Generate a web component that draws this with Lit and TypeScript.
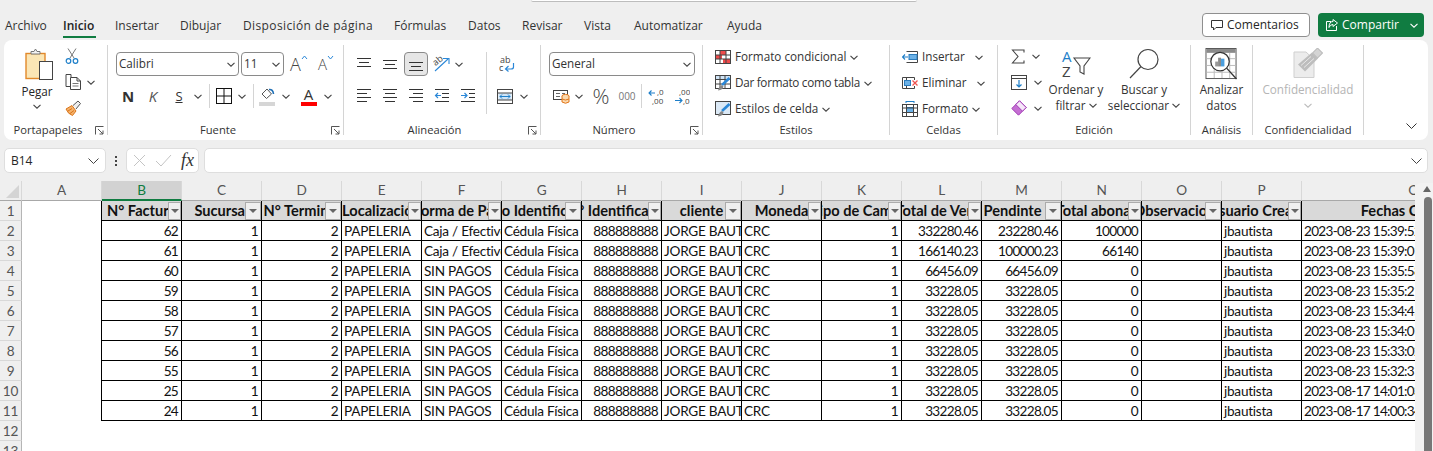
import { LitElement, html, css, svg } from "lit";
import { customElement } from "lit/decorators.js";

const chev = (c = "#444") => html`<svg class="chev" width="8" height="5" viewBox="0 0 8 5"><path d="M.5.8 4 4.2 7.5.8" fill="none" stroke=${c} stroke-width="1.1"/></svg>`;
const ic = (w: number, h: number, body: unknown) => html`<svg class="ic" width=${w} height=${h} viewBox="0 0 ${w} ${h}">${body}</svg>`;

const lines = (rows: [number, number, number][]) => ic(16, 16, rows.map(([x1, x2, y]) => svg`<path d="M${x1} ${y}.5H${x2}" stroke="#333" fill="none"/>`));
const alignTop = lines([[1, 15, 2], [3, 13, 6], [1, 15, 10]]);
const alignMid = lines([[1, 15, 4], [3, 13, 8], [1, 15, 12]]);
const alignBot = lines([[1, 15, 6], [3, 13, 10], [1, 15, 14]]);
const alignL = lines([[1, 15, 1], [1, 11, 5], [1, 15, 9], [1, 11, 13]]);
const alignC = lines([[1, 15, 1], [3, 13, 5], [1, 15, 9], [3, 13, 13]]);
const alignR = lines([[1, 15, 1], [5, 15, 5], [1, 15, 9], [5, 15, 13]]);
const outdent = ic(16, 16, svg`<path d="M1 1.5H15M8 5.5H15M8 9.5H15M1 13.5H15" stroke="#333" fill="none"/><path d="M7 7.5H1.5M4 5 1.5 7.5 4 10" stroke="#2b88d8" fill="none" stroke-width="1.2"/>`);
const indent = ic(16, 16, svg`<path d="M1 1.5H15M9 5.5H15M9 9.5H15M1 13.5H15" stroke="#333" fill="none"/><path d="M1 7.5H7M4.5 5 7 7.5 4.5 10" stroke="#2b88d8" fill="none" stroke-width="1.2"/>`);

const paste = ic(30, 33, svg`
  <rect x="1" y="5.5" width="19" height="25" fill="#fbe6b5" stroke="#e2892b" stroke-width="1.4"/>
  <path d="M6 6V3.5h3L10.500 1 12 3.500h3V6z" fill="#f4f4f4" stroke="#777"/>
  <rect x="14.500" y="13.500" width="13" height="18" fill="#fff" stroke="#444"/>`);
const cut = ic(14, 17, svg`
  <path d="M3 .5 9 10M11 .5 5 10" stroke="#777" fill="none"/>
  <circle cx="3.500" cy="13" r="2.300" fill="none" stroke="#1e7fc9" stroke-width="1.2"/><circle cx="10.500" cy="13" r="2.300" fill="none" stroke="#1e7fc9" stroke-width="1.2"/>`);
const copy = ic(17, 16, svg`
  <path d="M6 3V.5H1V12.500H5" fill="none" stroke="#444"/>
  <path d="M5.500 3.500H12L15.500 7V15.500H5.500zM12 3.500V7H15.500" fill="#fff" stroke="#444"/>
  <path d="M7.500 9.500H13.500M7.500 12H13.500" stroke="#777"/>`);
const brush = ic(17, 16, svg`
  <path d="M1 9 7 5.500 11 11 7.500 15.500Q3 14 1 9z" fill="#f5b26b" stroke="#d9741a"/>
  <path d="M3 11 7 8.500M5 13.500 9 10.500" stroke="#d9741a"/>
  <path d="M8 5.500 13 1 15.500 3.500 11 9" fill="#eee" stroke="#555"/>`);
const borders = ic(16, 16, svg`<rect x=".5" y=".5" width="15" height="15" fill="none" stroke="#111"/><path d="M8 .5V15.500M.5 8H15.500" stroke="#111"/>`);
const fill = ic(17, 19, svg`
  <path d="M3 7 8 2 12.500 7 7.500 11.500z" fill="#fff" stroke="#555"/>
  <path d="M10 2.500Q14 2 14.500 7" fill="none" stroke="#1f6fb5" stroke-width="1.600"/>
  <rect x="0" y="15" width="16" height="4" fill="#d6d6d6"/>`);
const orient = ic(18, 16, svg`
  <text x="1" y="8" font-size="9" fill="#444" font-family="Open Sans" transform="rotate(-40 5 7)">ab</text>
  <path d="M2 15 15 3M10 2.500H16V8" fill="none" stroke="#2b88d8" stroke-width="1.100"/>`);
const wrap = ic(16, 16, svg`
  <text x="1" y="7" font-size="9" fill="#444" font-family="Open Sans">ab</text>
  <text x="0" y="15" font-size="9" fill="#444" font-family="Open Sans">c</text>
  <path d="M14.500 7V11Q14.500 13 12 13H7M9.500 10 6.500 13 9.500 15.500" fill="none" stroke="#2b88d8" stroke-width="1.200"/>`);
const merge = ic(16, 15, svg`
  <rect x=".5" y=".5" width="15" height="14" fill="#fff" stroke="#444"/>
  <rect x="1.500" y="4" width="13" height="7" fill="#cfe4f6"/>
  <path d="M.5 4H15.500M.5 11H15.500" stroke="#444"/>
  <path d="M3 7.500H13M5 5.500 3 7.500 5 9.500M11 5.500 13 7.500 11 9.500" fill="none" stroke="#1e7fc9"/>`);
const currency = ic(17, 16, svg`
  <rect x=".5" y="2.500" width="14" height="9" fill="#fff" stroke="#444"/>
  <path d="M3 5.500H7M3 8.500H7M9 5.500H12" stroke="#666"/>
  <ellipse cx="12.500" cy="8" rx="3.500" ry="1.600" fill="#fbd9ae" stroke="#e2771b"/>
  <path d="M9 8V14Q12.500 16.500 16 14V8" fill="#fbd9ae" stroke="#e2771b"/>
  <path d="M9 11Q12.500 13 16 11" fill="none" stroke="#e2771b"/>`);
const decInc = ic(16, 17, svg`
  <text x="9" y="7" font-size="8" fill="#444" font-family="Open Sans">,0</text>
  <text x="4" y="16" font-size="8" fill="#444" font-family="Open Sans">,00</text>
  <path d="M7 5H1M3.500 2.500 1 5 3.500 7.500M1.500 5H1" fill="none" stroke="#1e7fc9" stroke-width="1.100"/>`);
const decDec = ic(16, 17, svg`
  <text x="5" y="7" font-size="8" fill="#444" font-family="Open Sans">,00</text>
  <text x="9" y="16" font-size="8" fill="#444" font-family="Open Sans">,0</text>
  <path d="M1 12.500H8M5.500 10 8 12.500 5.500 15" fill="none" stroke="#1e7fc9" stroke-width="1.100"/>`);
const cond = ic(16, 16, svg`
  <rect x=".5" y="1.500" width="15" height="13" fill="#fff" stroke="#444"/>
  <rect x="5" y="2" width="6" height="4" fill="#ee4b4b"/><rect x="1" y="6" width="6" height="4" fill="#ee4b4b"/><rect x="8" y="10" width="7" height="4" fill="#ee4b4b"/>
  <path d="M.5 6H15.500M.5 10H15.500M5 1.500V14.500M11 1.500V14.500" stroke="#444" fill="none"/>`);
const tableFmt = ic(16, 16, svg`
  <rect x=".5" y=".5" width="15" height="13" fill="#fff" stroke="#444"/>
  <rect x="1" y="1" width="14" height="3" fill="#cfe4f6"/>
  <path d="M.5 4.500H15.500M.5 9H15.500M5 .5V13.500M10 .5V13.500" stroke="#444" fill="none"/>
  <path d="M14.500 3 7 10" stroke="#2b88d8" stroke-width="2.600"/><path d="M7 10Q4 11 3 15.500 8 15 8.500 11.500z" fill="#888"/>`);
const cellFmt = ic(16, 16, svg`
  <rect x=".5" y=".5" width="15" height="13" fill="#dbe9f6" stroke="#444"/>
  <path d="M14.500 3 7 10" stroke="#2b88d8" stroke-width="2.600"/><path d="M7 10Q4 11 3 15.500 8 15 8.500 11.500z" fill="#888"/>`);
const insert = ic(16, 16, svg`
  <path d="M4.500 2.500H15.500V13.500H4.500" fill="none" stroke="#444"/>
  <rect x="7" y="5.500" width="8" height="5" fill="#6cb2e8" stroke="#2b7cbd"/>
  <path d="M.5 8H6M3 5.500.5 8 3 10.500" fill="none" stroke="#1e7fc9" stroke-width="1.100"/>`);
const del = ic(16, 16, svg`
  <path d="M.5 2.500H12.500M.5 13.500H12.500M.5 2.500V13.500M12.500 2.500V5M12.500 11V13.500M4.500 2.500V13.500" fill="none" stroke="#444"/>
  <rect x="2.500" y="5.500" width="6" height="5" fill="#6cb2e8" stroke="#2b7cbd"/>
  <path d="M10.500 5.500 15.500 10.500M15.500 5.500 10.500 10.500" stroke="#ef5350" stroke-width="1.300"/>`);
const fmtCell = ic(16, 16, svg`
  <rect x=".5" y="3.500" width="15" height="12" fill="#fff" stroke="#444"/>
  <rect x="4.500" y="6.500" width="7" height="5" fill="#6cb2e8" stroke="#2b7cbd"/>
  <path d="M.5 7H15.500M.5 11.500H15.500M4.500 3.500V15.500M11.500 3.500V15.500" stroke="#444" fill="none"/>
  <path d="M4 .5H12M4 0V2M12 0V2" stroke="#1e7fc9"/>`);
const sigma = ic(14, 15, svg`<path d="M13 3.500V1H1.500L7 7.500 1.500 14H13V11.500" fill="none" stroke="#444" stroke-width="1.100"/>`);
const fillDown = ic(16, 15, svg`<rect x=".5" y=".5" width="15" height="14" fill="#fff" stroke="#444"/><path d="M.5 3.500H15.500" stroke="#444"/><path d="M8 5V12M5.500 9.500 8 12 10.500 9.500" fill="none" stroke="#1e7fc9" stroke-width="1.200"/>`);
const eraser = ic(16, 16, svg`<path d="M8.500 .8 15.200 7.500 7.500 15.200.8 8.500z" fill="#c56fd3" stroke="#a23bb5"/><path d="M8.500 .8 15.200 7.500 11.500 11.200 4.800 4.500z" fill="#f6e6f9" stroke="#a23bb5"/>`);
const sortI = ic(30, 30, svg`
  <text x="1" y="13" font-size="15" fill="#1e7fc9" font-family="Open Sans">A</text>
  <text x="1" y="28" font-size="15" fill="#444" font-family="Open Sans">Z</text>
  <path d="M13 9H29L23 17V25L19 23V17z" fill="#fff" stroke="#444" stroke-width="1.100"/>`);
const search = ic(30, 31, svg`<circle cx="19" cy="11" r="10" fill="#fff" stroke="#444" stroke-width="1.200"/><path d="M12 18 1 29.500" stroke="#444" stroke-width="1.200"/>`);
const analyze = ic(33, 33, svg`
  <rect x=".5" y=".5" width="31" height="31" fill="#fff" stroke="#555"/>
  <rect x="1" y="1" width="30" height="4" fill="#8a8a8a"/>
  <path d="M1 11H31M1 18H31M1 25H31M9 5V31M17 5V31M25 5V31" stroke="#bbb"/>
  <circle cx="15" cy="14" r="9.500" fill="#fff" stroke="#333" stroke-width="1.300"/>
  <rect x="10" y="14" width="3" height="5" fill="#999"/><rect x="13" y="10" width="3" height="9" fill="#8a8a8a"/><rect x="16" y="11" width="3.500" height="8" fill="#4a9ede"/>
  <path d="M22 21 32 32" stroke="#333" stroke-width="1.400"/>`);
const conf = ic(30, 31, svg`
  <path d="M1 3.500H13L21 11V29H1z" fill="#ececec" stroke="#cfcfcf"/>
  <path d="M5 16 19 4 25 10 12 23z" fill="#bdbdbd"/><path d="M8 17 18 8M11 19 21 10" stroke="#e8e8e8"/>
  <rect x="21" y="1" width="7" height="7" fill="#d4d4d4" stroke="#bbb" transform="rotate(45 24.500 4.500)"/>`);
const launcher = html`<svg class="launch" width="9" height="9" viewBox="0 0 9 9"><path d="M.5 8.500V.5H8.500M3 3 8 8M8 4.500V8H4.500" fill="none" stroke="#555"/></svg>`;

type Col = { l: string; h: string; n?: boolean; left?: boolean };
const cols: Col[] = [
  { l: "B", h: "N° Factura", n: true }, { l: "C", h: "Sucursal" }, { l: "D", h: "N° Terminal" },
  { l: "E", h: "Localización", n: true }, { l: "F", h: "Forma de Pago", n: true }, { l: "G", h: "Tipo Identificación" },
  { l: "H", h: "N° Identificación", n: true }, { l: "I", h: "cliente" }, { l: "J", h: "Moneda", n: true },
  { l: "K", h: "Tipo de Cambio", n: true }, { l: "L", h: "Total de Venta", n: true }, { l: "M", h: "Pendinte", left: true },
  { l: "N", h: "Total abonado", n: true }, { l: "O", h: "Observaciones" }, { l: "P", h: "Usuario Creador", n: true },
  { l: "Q", h: "Fechas Creación" },
];
const rows: [string, string, string, string, string, string][] = [
  ["62", "Caja / Efectivo", "332280.46", "232280.46", "100000", "2023-08-23 15:39:52"],
  ["61", "Caja / Efectivo", "166140.23", "100000.23", "66140", "2023-08-23 15:39:01"],
  ["60", "SIN PAGOS", "66456.09", "66456.09", "0", "2023-08-23 15:35:58"],
  ["59", "SIN PAGOS", "33228.05", "33228.05", "0", "2023-08-23 15:35:21"],
  ["58", "SIN PAGOS", "33228.05", "33228.05", "0", "2023-08-23 15:34:45"],
  ["57", "SIN PAGOS", "33228.05", "33228.05", "0", "2023-08-23 15:34:01"],
  ["56", "SIN PAGOS", "33228.05", "33228.05", "0", "2023-08-23 15:33:02"],
  ["55", "SIN PAGOS", "33228.05", "33228.05", "0", "2023-08-23 15:32:31"],
  ["25", "SIN PAGOS", "33228.05", "33228.05", "0", "2023-08-17 14:01:03"],
  ["24", "SIN PAGOS", "33228.05", "33228.05", "0", "2023-08-17 14:00:34"],
];
const tabs = ["Archivo", "Inicio", "Insertar", "Dibujar", "Disposición de página", "Fórmulas", "Datos", "Revisar", "Vista", "Automatizar", "Ayuda"];

@customElement("app-root")
export class AppRoot extends LitElement {
  static styles = css`
    :host { display: block; width: 1433px; height: 451px; overflow: hidden; background: #efefef; color: #262626;
      font: 11.7px/16px "Open Sans", "Noto Sans", sans-serif; }
    svg { display: block; flex: none; }
    .search-edge { margin-left: 531px; width: 386px; height: 2px; background: #fff; border-bottom: 1px solid #bdbdbd; box-sizing: border-box; border-radius: 0 0 3px 3px; }
    .top { height: 38px; box-sizing: border-box; padding: 11px 9px 3px 5px; display: flex; align-items: stretch; font-size: 12px; }
    .tabs { display: grid; grid-template-columns: 58px 52px 65px 63px 151px 74px 54px 62px 50px 93px auto; flex: 1; }
    .tab { position: relative; line-height: 26px; color: #333; white-space: nowrap; }
    .tab.on { font-weight: 600; color: #222; }
    .tab.long { letter-spacing: .38px; }
    .tab.on::after { content: ""; position: absolute; left: 0; width: 33px; bottom: 1px; height: 2px; background: #107c41; }
    .btn { display: flex; align-items: center; height: 24px; box-sizing: border-box; border-radius: 4px; }
    .comments { width: 108px; background: #fff; border: 1px solid #8f8f8f; gap: 3px; padding-left: 7px; margin-right: 8px; }
    .share { width: 106px; background: #107c41; color: #fff; padding-left: 7px; gap: 3px; }
    .share .chev { margin-left: 8px; }

    .ribbon { height: 100px; margin: 0 5px 0 4px; background: #fff; border-radius: 8px; display: flex; position: relative; }
    .g { display: flex; flex-direction: column; position: relative; flex: none; box-sizing: border-box; }
    .g::after { content: ""; position: absolute; right: -1px; top: 5px; bottom: 5px; width: 1px; background: #d4d4d4; }
    .body { flex: 1; display: flex; min-height: 0; }
    .label { height: 18px; line-height: 16px; font-size: 11.2px; text-align: center; white-space: nowrap; padding-bottom: 3px; box-sizing: border-box; color: #333; }
    .label.lx { padding-right: 15px; }
    .launch { position: absolute; right: 3px; bottom: 5px; }
    .g1 { width: 103px; margin-right: 1px; } .g2 { width: 235px; margin-right: 1px; } .g3 { width: 196px; margin-right: 1px; }
    .g4 { width: 161px; margin-right: 1px; } .g5 { width: 186px; margin-right: 1px; } .g6 { width: 107px; margin-right: 1px; }
    .g7 { width: 192px; margin-right: 1px; } .g8 { width: 61px; margin-right: 1px; } .g9 { width: 110px; margin-right: 1px; }
    .collapse { position: absolute; right: 11px; bottom: 11px; }

    .cell-c { display: flex; align-items: center; justify-content: center; }
    .stack { display: flex; flex-direction: column; align-items: center; }
    .pegar { width: 66px; padding-top: 8px; flex: none; }
    .pegar .ic { margin-left: 5px; }
    .pegar .txt { margin-top: 2px; }
    .pegar .chev { margin-top: 5px; }
    .clip { width: 40px; margin-left: -5px; padding-top: 3px; display: grid; grid-auto-rows: 26px; }
    .clip > div { display: flex; align-items: center; }
    .clip .chev { margin-left: 5px; }

    .two { padding: 12px 0 0 8px; display: flex; flex-direction: column; gap: 8px; }
    .r { display: flex; align-items: center; height: 24px; }
    .combo { height: 24px; box-sizing: border-box; border: 1px solid #8a8a8a; border-radius: 4px; display: flex; align-items: center; justify-content: space-between; padding: 0 3px 2px 2px; background: #fff; color: #333; }
    .combo .chev { margin-top: 2px; }
    .c-font { width: 123px; } .c-size { width: 43px; margin-left: 2px; } .c-num { width: 146px; }
    .grow { font-size: 18px; font-weight: 300; color: #444; margin-left: 6px; display: flex; align-items: flex-start; width: 28px; }
    .shrink { font-size: 15px; font-weight: 300; color: #444; width: 20px; display: flex; align-items: flex-start; }
    .grow sup, .shrink sup { display: block; margin-top: -1px; }
    .fontrow { display: grid; grid-template-columns: 24px 26px 26px 12px 10px 20px 16px 6px 22px 16px 29px 10px; align-items: center; height: 24px; justify-items: center; }
    .vs { width: 1px; height: 24px; background: #d4d4d4; }
    .b { font: 700 15px "Open Sans", sans-serif; color: #333; }
    .k { font: italic 15px "Open Sans", sans-serif; color: #555; }
    .s { font: 13px "Open Sans", sans-serif; color: #333; text-decoration: underline; }
    .colorA { display: flex; flex-direction: column; align-items: center; font: 15px/15px "Open Sans", sans-serif; color: #333; }
    .colorA i { width: 16px; height: 4px; background: #f00; display: block; }

    .alg { display: flex; padding: 12px 0 0 7px; }
    .alg-grid { display: grid; grid-template-columns: repeat(5, 26px); grid-auto-rows: 24px; row-gap: 8px; place-items: center; }
    .alg-grid .chev { justify-self: start; }
    .sel { width: 24px; height: 24px; box-sizing: border-box; border: 1px solid #8a8a8a; background: #e6e6e6; border-radius: 4px; display: flex; align-items: center; justify-content: center; }
    .vs2 { width: 1px; height: 62px; background: #d4d4d4; margin: 0 0 0 5px; }
    .alg-r { padding-left: 10px; display: grid; grid-auto-rows: 24px; row-gap: 8px; }
    .alg-r > div { display: flex; align-items: center; gap: 7px; }
    .alg-r .w { padding-left: 2px; }

    .numrow { display: grid; grid-template-columns: 24px 12px 32px 20px 8px 22px 30px; align-items: center; justify-items: center; height: 24px; }
    .pct { font: 300 21px "Open Sans", sans-serif; color: #444; line-height: 24px; }
    .k000 { font: 10px "Open Sans", sans-serif; color: #777; }

    .list { padding: 4px 0 0 12px; display: grid; grid-auto-rows: 26px; }
    .li { display: flex; align-items: center; gap: 4px; white-space: nowrap; color: #333; }
    .li > span.t { margin-top: -2px; }
    .li .tight { letter-spacing: -.27px; }
    .li .far { margin-left: 6px; }

    .sum { width: 38px; padding: 3px 0 0 13px; display: grid; grid-auto-rows: 26px; flex: none; box-sizing: content-box; }
    .sum > div { display: flex; align-items: center; gap: 7px; }
    .big { padding-top: 8px; text-align: center; white-space: nowrap; color: #333; }
    .big .ic { height: 32px; }
    .big .txt { margin-top: 1px; display: block; }
    .big .ln { display: flex; align-items: center; justify-content: center; gap: 3px; height: 16px; }
    .w-sort { width: 54px; } .w-search { width: 82px; } .w-an { width: 61px; } .w-conf { width: 110px; color: #b5b5b5; }
    .w-sort, .w-search, .w-an, .w-conf { display: flex; flex-direction: column; align-items: center; }

    .fbar { margin: 8px 5px 0 4px; height: 25px; display: flex; align-items: stretch; }
    .box { background: #fff; border: 1px solid #dedede; border-radius: 5px; box-sizing: border-box; display: flex; align-items: center; }
    .name { width: 102px; padding: 0 6px; justify-content: space-between; font-size: 12px; }
    .dots { width: 20px; display: flex; flex-direction: column; align-items: center; justify-content: center; gap: 2px; }
    .dots i { width: 2px; height: 2px; background: #444; display: block; }
    .fx { width: 73px; padding-left: 6px; gap: 9px; }
    .fxt { font: italic 400 18px "Liberation Serif", serif; color: #333; }
    .input { flex: 1; margin-left: 5px; justify-content: flex-end; padding-right: 5px; }

    .area { margin-top: 8px; display: flex; height: 270px; }
    .sheet { width: 1415px; overflow: hidden; flex: none; display: grid; grid-template-columns: 22px 80px repeat(15, 80px) 224px; grid-auto-rows: 20px; background: #fff;
      font: 13.6px/20px Lato, Carlito, sans-serif; letter-spacing: -.25px; color: #111; }
    .cell { box-sizing: border-box; overflow: hidden; white-space: nowrap; position: relative; padding: 0 2px; }
    .hd { background: #efefef; color: #555; text-align: center; line-height: 19px; border-right: 1px solid #d8d8d8; border-bottom: 1px solid #a8a8a8; }
    .hd.act { background: #d2d2d2; color: #107c41; border-bottom: 2px solid #107c41; }
    .corner { background: #efefef; border-right: 1px solid #d8d8d8; border-bottom: 1px solid #a8a8a8; display: flex; align-items: flex-end; justify-content: flex-end; padding: 0 2px 2px 0; }
    .rh { background: #efefef; color: #555; text-align: center; border-right: 1px solid #b5b5b5; border-bottom: 1px solid #d8d8d8; }
    .a { padding: 0; }
    .a.edge { border-right: 1px solid #000; }
    .d { border-right: 1px solid #000; border-bottom: 1px solid #000; }
    .num { text-align: right; letter-spacing: -.7px; padding-right: 3px; }
    .date { letter-spacing: -.72px; }
    .th { background: #d9d9d9; font-weight: 700; font-size: 14.6px; letter-spacing: 0; border-right: 1px solid #000; border-bottom: 1px solid #000; display: flex; justify-content: center; padding: 0; }
    .th span { flex: none; }
    .th .left { padding-right: 18px; }
    .fb { position: absolute; right: 0; bottom: 0; top: 1px; width: 16px; background: #efefef; border: 1px solid #ababab; box-sizing: border-box; display: flex; align-items: center; justify-content: center; }
    .fb.n { width: 13px; }
    .fb::after { content: ""; border-top: 4px solid #666; border-left: 4px solid transparent; border-right: 4px solid transparent; }
    .vbar { width: 18px; background: #f2f2f2; border-radius: 6px 0 0 0; display: flex; flex-direction: column; align-items: center; margin-top: 2px; flex: none; }
    .up { width: 0; height: 0; margin-top: 3px; border-bottom: 6px solid #666; border-left: 4px solid transparent; border-right: 4px solid transparent; margin-left: 6px; }
    .thumb { width: 8px; flex: 1; background: #777; border-radius: 4px 4px 0 0; margin: 5px 0 0 7px; }
  `;

  private tabsRow() {
    return html`<div class="tabs">${tabs.map((t) => html`<div class="tab ${t === "Inicio" ? "on" : ""} ${t.length > 15 ? "long" : ""}">${t}</div>`)}</div>`;
  }

  render() {
    const q = cols.length;
    return html`
      <div class="search-edge"></div>
      <div class="top">
        ${this.tabsRow()}
        <div class="btn comments">
          <svg width="14" height="14" viewBox="0 0 14 14"><path d="M1.500 2.500H12.500V9.500H6L3.500 12V9.500H1.500z" fill="none" stroke="#333"/></svg>Comentarios
        </div>
        <div class="btn share">
          <svg width="14" height="14" viewBox="0 0 14 14"><path d="M6 3.500H1.500V12.500H11.500V8M8 1.500 12.500 5 8 8.500V6.500Q5 6.500 4 9.500 4 3.500 8 3.500z" fill="none" stroke="#fff"/></svg>Compartir${chev("#fff")}
        </div>
      </div>

      <div class="ribbon">
        <div class="g g1">
          <div class="body">
            <div class="stack pegar">${paste}<span class="txt">Pegar</span>${chev()}</div>
            <div class="clip">
              <div><span class="cell-c">${cut}</span></div>
              <div>${copy}${chev()}</div>
              <div>${brush}</div>
            </div>
          </div>
          <div class="label lx">Portapapeles</div>${launcher}
        </div>

        <div class="g g2">
          <div class="body two">
            <div class="r">
              <div class="combo c-font">Calibri${chev()}</div>
              <div class="combo c-size">11${chev()}</div>
              <div class="grow">A<sup>${html`<svg width="7" height="5" viewBox="0 0 7 5"><path d="M1 4 3.500 1 6 4" fill="none" stroke="#2b88d8"/></svg>`}</sup></div>
              <div class="shrink">A<sup>${html`<svg width="7" height="5" viewBox="0 0 7 5"><path d="M1 1 3.500 4 6 1" fill="none" stroke="#2b88d8"/></svg>`}</sup></div>
            </div>
            <div class="fontrow">
              <span class="b">N</span><span class="k">K</span><span class="s">S</span>${chev()}
              <i class="vs"></i>${borders}${chev()}<i class="vs"></i>${fill}${chev()}
              <span class="colorA">A<i></i></span>${chev()}
            </div>
          </div>
          <div class="label lx">Fuente</div>${launcher}
        </div>

        <div class="g g3">
          <div class="body alg">
            <div class="alg-grid">
              ${alignTop}${alignMid}<div class="sel">${alignBot}</div>${orient}${chev()}
              ${alignL}${alignC}${alignR}${outdent}${indent}
            </div>
            <i class="vs2"></i>
            <div class="alg-r">
              <div class="w">${wrap}</div>
              <div>${merge}${chev()}</div>
            </div>
          </div>
          <div class="label lx">Alineación</div>${launcher}
        </div>

        <div class="g g4">
          <div class="body two">
            <div class="r"><div class="combo c-num">General${chev()}</div></div>
            <div class="numrow">
              ${currency}${chev()}<span class="pct">%</span><span class="k000">000</span><i class="vs"></i>${decInc}${decDec}
            </div>
          </div>
          <div class="label lx">Número</div>${launcher}
        </div>

        <div class="g g5">
          <div class="body list">
            <div class="li">${cond}<span class="t">Formato condicional</span>${chev()}</div>
            <div class="li">${tableFmt}<span class="t tight">Dar formato como tabla</span>${chev()}</div>
            <div class="li">${cellFmt}<span class="t">Estilos de celda</span>${chev()}</div>
          </div>
          <div class="label">Estilos</div>
        </div>

        <div class="g g6">
          <div class="body list">
            <div class="li">${insert}<span class="t">Insertar</span><span class="far">${chev()}</span></div>
            <div class="li">${del}<span class="t">Eliminar</span><span class="far">${chev()}</span></div>
            <div class="li">${fmtCell}<span class="t">Formato</span>${chev()}</div>
          </div>
          <div class="label">Celdas</div>
        </div>

        <div class="g g7">
          <div class="body">
            <div class="sum">
              <div>${sigma}${chev()}</div>
              <div>${fillDown}${chev()}</div>
              <div>${eraser}${chev()}</div>
            </div>
            <div class="big w-sort">${sortI}<span class="txt"><span class="ln">Ordenar y</span><span class="ln">filtrar${chev()}</span></span></div>
            <div class="big w-search">${search}<span class="txt"><span class="ln">Buscar y</span><span class="ln">seleccionar${chev()}</span></span></div>
          </div>
          <div class="label">Edición</div>
        </div>

        <div class="g g8">
          <div class="body">
            <div class="big w-an">${analyze}<span class="txt"><span class="ln">Analizar</span><span class="ln">datos</span></span></div>
          </div>
          <div class="label">Análisis</div>
        </div>

        <div class="g g9">
          <div class="body">
            <div class="big w-conf">${conf}<span class="txt"><span class="ln">Confidencialidad</span><span class="ln">${chev("#bbb")}</span></span></div>
          </div>
          <div class="label">Confidencialidad</div>
        </div>

        <div class="collapse"><svg width="11" height="6" viewBox="0 0 11 6"><path d="M.5.5 5.500 5.500 10.500.5" fill="none" stroke="#333"/></svg></div>
      </div>

      <div class="fbar">
        <div class="box name">B14 ${html`<svg width="11" height="6" viewBox="0 0 11 6"><path d="M.5.5 5.500 5.500 10.500.5" fill="none" stroke="#444"/></svg>`}</div>
        <div class="dots"><i></i><i></i><i></i></div>
        <div class="box fx">
          <svg width="13" height="13" viewBox="0 0 13 13"><path d="M1 1 12 12M12 1 1 12" stroke="#c4c4c4" fill="none"/></svg>
          <svg width="17" height="13" viewBox="0 0 17 13"><path d="M1 7 6 12 16 1" stroke="#c4c4c4" fill="none"/></svg>
          <span class="fxt">fx</span>
        </div>
        <div class="box input"><svg width="11" height="6" viewBox="0 0 11 6"><path d="M.5.5 5.500 5.500 10.500.5" fill="none" stroke="#444"/></svg></div>
      </div>

      <div class="area">
        <div class="sheet">
          <div class="corner"><svg width="13" height="13" viewBox="0 0 13 13"><path d="M13 0V13H0z" fill="#d4d4d4"/></svg></div>
          <div class="cell hd">A</div>
          ${cols.map((c) => html`<div class="cell hd ${c.l === "B" ? "act" : ""}">${c.l}</div>`)}

          <div class="cell rh">1</div>
          <div class="cell a edge"></div>
          ${cols.map((c) => html`<div class="cell th"><span class=${c.left ? "left" : ""}>${c.h}</span>${c.l !== "Q" ? html`<i class="fb ${c.n ? "n" : ""}"></i>` : ""}</div>`)}

          ${rows.map((r, i) => html`
            <div class="cell rh">${i + 2}</div>
            <div class="cell a edge"></div>
            <div class="cell d num">${r[0]}</div>
            <div class="cell d num">1</div>
            <div class="cell d num">2</div>
            <div class="cell d">PAPELERIA</div>
            <div class="cell d">${r[1]}</div>
            <div class="cell d">Cédula Física</div>
            <div class="cell d num">888888888</div>
            <div class="cell d">JORGE BAUTISTA</div>
            <div class="cell d">CRC</div>
            <div class="cell d num">1</div>
            <div class="cell d num">${r[2]}</div>
            <div class="cell d num">${r[3]}</div>
            <div class="cell d num">${r[4]}</div>
            <div class="cell d"></div>
            <div class="cell d">jbautista</div>
            <div class="cell d date">${r[5]}</div>
          `)}
          ${[12, 13].map((n) => html`<div class="cell rh">${n}</div>${Array.from({ length: q + 1 }, () => html`<div class="cell a"></div>`)}`)}
        </div>
        <div class="vbar"><i class="up"></i><i class="thumb"></i></div>
      </div>
    `;
  }
}
